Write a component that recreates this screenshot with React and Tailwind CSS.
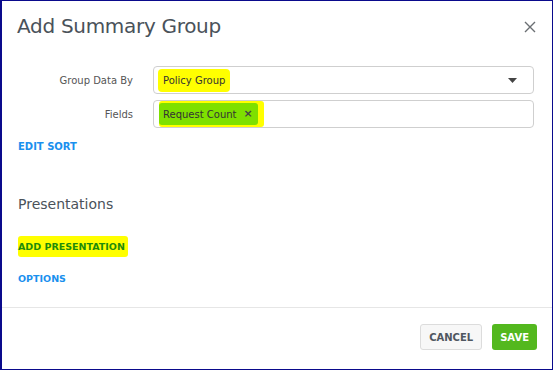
import React from "react";

export default function App() {
  return (
    <div className="w-[553px] h-[372px] bg-white" style={{ fontFamily: "'DejaVu Sans', Verdana, sans-serif" }}>
      <div className="w-[553px] h-[370px] border border-l-2 border-[#0a0a8c] flex flex-col">
        {/* Header */}
        <div className="flex items-center justify-between pl-[15px] pr-[16px] pt-[9px] h-[40px]">
          <h1 className="text-[20px] text-[#4a525a] tracking-[-0.3px]">Add Summary Group</h1>
          <svg width="12" height="12" viewBox="0 0 12 12" className="mt-[2px]">
            <path d="M1 1L11 11M11 1L1 11" stroke="#6b6f73" strokeWidth="1.4" />
          </svg>
        </div>

        {/* Body */}
        <div className="flex flex-col pl-[16px] pr-[18px] pt-[25px]">
          <div className="flex items-center h-[28px]">
            <div className="w-[115px] text-right text-[10px] text-[#555]">Group Data By</div>
            <div className="ml-[20px] flex-1 h-[28px] border border-[#cfcfcf] rounded-[4px] flex items-center pl-[4px] pr-[16px] justify-between">
              <span className="bg-[#ffff00] rounded-[4px] px-[5px] py-[4px] text-[10px] text-[#333]">Policy Group</span>
              <svg width="9" height="5" viewBox="0 0 9 5"><path d="M0 0H9L4.5 5Z" fill="#444" /></svg>
            </div>
          </div>
          <div className="flex items-center h-[28px] mt-[6px]">
            <div className="w-[115px] text-right text-[10px] text-[#555]">Fields</div>
            <div className="ml-[20px] flex-1 h-[28px] border border-[#cfcfcf] rounded-[4px] flex items-center pl-[5px]">
              <span className="bg-[#ffff00] rounded-[3px] pr-[6px] py-[2px] flex">
                <span className="bg-[#7ee000] rounded-[3px] pl-[4px] pr-[5px] py-[3px] text-[10px] text-[#333] flex items-center gap-[7px]">
                  Request Count
                  <span className="text-[11px] font-bold text-[#444]">×</span>
                </span>
              </span>
            </div>
          </div>
          <div className="mt-[11px] text-[10px] font-bold text-[#1a90ee]">EDIT SORT</div>

          <div className="mt-[40px] text-[14px] text-[#4a525a]">Presentations</div>

          <div className="mt-[18px]">
            <span className="bg-[#ffff00] rounded-[3px] py-[5px] pr-[3px] text-[9.5px] font-bold text-[#1e8c0a]">ADD PRESENTATION</span>
          </div>
          <div className="mt-[15px] text-[9.5px] font-bold text-[#1a90ee]">OPTIONS</div>
        </div>

        <div className="mt-auto border-t border-[#e6e6e6] h-[62px] flex items-start pt-[16px] justify-end gap-[10px] pr-[15px]">
          <button className="h-[26px] px-[8px] border border-[#dcdcdc] bg-[#f7f7f7] rounded-[3px] text-[10px] font-bold text-[#4f5660]">CANCEL</button>
          <button className="h-[26px] px-[8px] bg-[#53b81e] rounded-[3px] text-[10px] font-bold text-white">SAVE</button>
        </div>
      </div>
    </div>
  );
}
